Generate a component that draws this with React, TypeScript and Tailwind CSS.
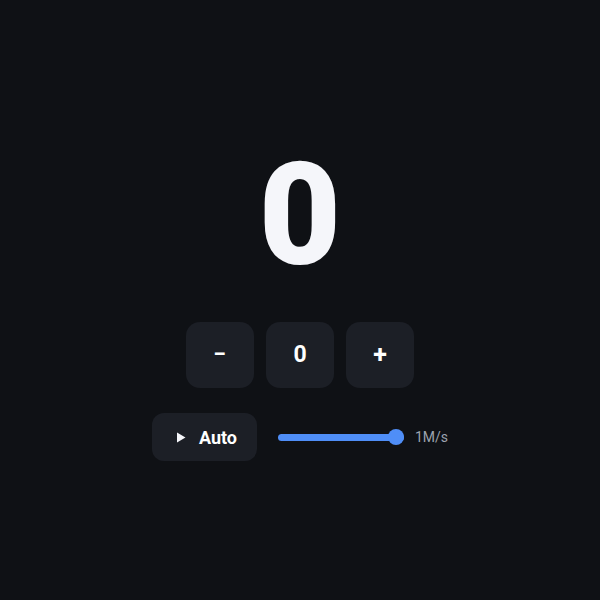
export default function App() {
  return (
    <div
      className="w-[600px] h-[600px] bg-[#0f1115] flex flex-col items-center text-white"
      style={{ fontFamily: 'Roboto, "Liberation Sans", sans-serif' }}
    >
      <div className="mt-[133px] h-[166px] flex items-center justify-center text-[142px] leading-none font-black text-[#f5f6fa]">
        0
      </div>
      <div className="mt-[23px] flex gap-3">
        <button className="w-[68px] h-[66px] rounded-[14px] bg-[#1c1f26] text-[23px] font-bold flex items-center justify-center">
          −
        </button>
        <button className="w-[68px] h-[66px] rounded-[14px] bg-[#1c1f26] text-[23px] font-bold flex items-center justify-center">
          0
        </button>
        <button className="w-[68px] h-[66px] rounded-[14px] bg-[#1c1f26] text-[25px] font-bold flex items-center justify-center">
          +
        </button>
      </div>
      <div className="mt-[25px] flex items-center">
        <button className="w-[105px] h-[48px] rounded-[12px] bg-[#1c1f26] flex items-center justify-center pl-1 gap-[13px] text-[18px] font-bold">
          <svg width="10" height="11" viewBox="0 0 10 11">
            <path d="M1 0.5 L9.5 5.5 L1 10.5 Z" fill="#f5f6fa" />
          </svg>
          Auto
        </button>
        <div className="ml-[21px] w-[126px] h-4 relative flex items-center">
          <div className="w-full h-[7px] rounded-full bg-[#4f8ef7]" />
          <div className="absolute right-0 top-0 w-4 h-4 rounded-full bg-[#4f8ef7]" />
        </div>
        <span className="ml-[11px] text-[14px] text-[#9ca3af]">1M/s</span>
      </div>
    </div>
  );
}
